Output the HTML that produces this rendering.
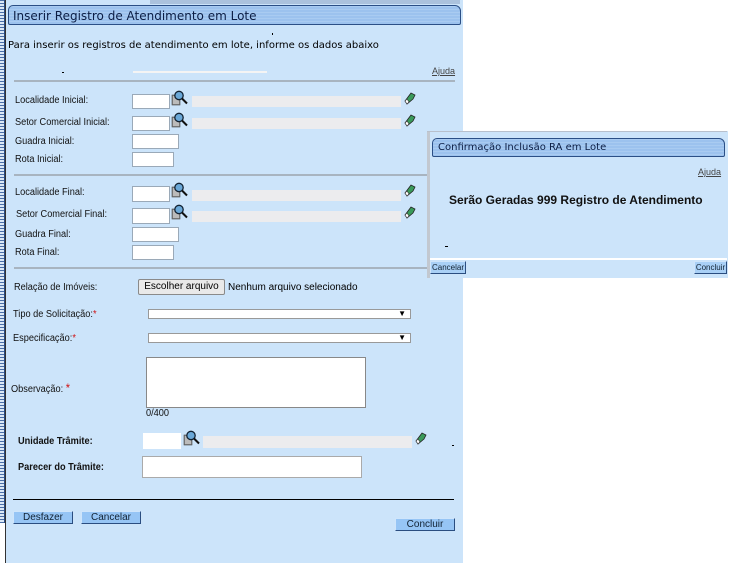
<!DOCTYPE html>
<html><head><meta charset="utf-8"><style>
*{margin:0;padding:0;box-sizing:border-box}
body{width:744px;height:574px;background:#fff;position:relative;overflow:hidden;font-family:"Liberation Sans",sans-serif;font-size:10px;color:#000}
.a{position:absolute}
.panel{left:6px;top:0;width:457px;height:563px;background:#cce4fa}
.stripe{left:0;top:0;width:5px;height:523px;background:repeating-linear-gradient(#4a6fa8 0 1px,#dbe8f6 1px 3px);border-right:1px solid #2a4a80}
.vline{left:5px;top:0;width:1px;height:563px;background:#333}
.title{background:repeating-linear-gradient(#a9cbf1 0 1px,#9cc2ee 1px 3px);border:1px solid #2b4f86;border-radius:5px 6px 2px 2px;font-family:"DejaVu Sans",sans-serif;color:#0b1d44}
.lbl{font-size:10px;color:#111;transform:scaleX(0.92);transform-origin:left}
.in{background:#fff;border:1px solid #9aa9b8}
.gray{background:#ececee}
.hr{height:2px;background:#a8b4c0}
.btn{background:#96c5f5;border:1px solid #2a4d80;border-left-color:#cfe5fb;border-top-color:#cfe5fb;font-size:10px;text-align:center;color:#123;line-height:11px}
.red{color:#d01010}
</style></head><body>
<div class="a panel"></div>
<div class="a stripe"></div>
<div class="a vline"></div>
<div class="a" style="left:150px;top:0;width:310px;height:4px;background:#8aa0c0;opacity:.5"></div>
<div class="a title" style="left:8px;top:5px;width:453px;height:20px;font-size:12px;padding:3px 0 0 4px">Inserir Registro de Atendimento em Lote</div>
<div class="a" style="left:272px;top:33px;width:1px;height:2px;background:#000"></div>
<div class="a" style="left:8px;top:40px;font-family:'DejaVu Sans',sans-serif;font-size:10px">Para inserir os registros de atendimento em lote, informe os dados abaixo</div>
<div class="a" style="left:62px;top:72px;width:2px;height:1px;background:#000"></div>
<div class="a" style="left:133px;top:71px;width:134px;height:2px;background:#f4f4f4"></div>
<div class="a" style="left:432px;top:66px;font-size:9px;color:#444;text-decoration:underline">Ajuda</div>
<div class="a hr" style="left:14px;top:80px;width:441px"></div>

<svg width="0" height="0" style="position:absolute"><defs>
<symbol id="mag" viewBox="0 0 18 16"><rect x="1" y="5" width="8" height="10" fill="#888" stroke="#444" stroke-width=".6"/><rect x="2" y="6" width="6" height="8" fill="#bbb"/><circle cx="8" cy="5.5" r="4.2" fill="#6aa8d8" stroke="#123" stroke-width="1.3"/><line x1="11" y1="8.5" x2="16" y2="13.5" stroke="#111" stroke-width="2"/></symbol>
<symbol id="er" viewBox="0 0 12 14"><path d="M3 13 L1 10 L7 2 L11 4 L9 8 Z" fill="#3a9a5a" stroke="#222" stroke-width=".8"/><path d="M1 10 L3 13 L5 11 L3 8Z" fill="#fff" stroke="#333" stroke-width=".6"/></symbol>
</defs></svg>

<div class="a lbl" style="left:15px;top:95px">Localidade Inicial:</div>
<div class="a in" style="left:132px;top:94px;width:38px;height:15px"></div>
<svg class="a" style="left:171px;top:90px" width="18" height="16"><use href="#mag"/></svg>
<div class="a gray" style="left:192px;top:96px;width:209px;height:11px"></div>
<svg class="a" style="left:404px;top:91px" width="12" height="14"><use href="#er"/></svg>

<div class="a lbl" style="left:15px;top:117px">Setor Comercial Inicial:</div>
<div class="a in" style="left:132px;top:116px;width:38px;height:15px"></div>
<svg class="a" style="left:171px;top:112px" width="18" height="16"><use href="#mag"/></svg>
<div class="a gray" style="left:192px;top:118px;width:209px;height:11px"></div>
<svg class="a" style="left:404px;top:113px" width="12" height="14"><use href="#er"/></svg>

<div class="a lbl" style="left:15px;top:136px">Guadra Inicial:</div>
<div class="a in" style="left:132px;top:134px;width:47px;height:15px"></div>
<div class="a lbl" style="left:15px;top:154px">Rota Inicial:</div>
<div class="a in" style="left:132px;top:152px;width:42px;height:15px"></div>
<div class="a hr" style="left:14px;top:174px;width:441px"></div>

<div class="a lbl" style="left:15px;top:187px">Localidade Final:</div>
<div class="a in" style="left:132px;top:186px;width:38px;height:16px"></div>
<svg class="a" style="left:171px;top:182px" width="18" height="16"><use href="#mag"/></svg>
<div class="a gray" style="left:192px;top:190px;width:209px;height:11px"></div>
<svg class="a" style="left:404px;top:183px" width="12" height="14"><use href="#er"/></svg>

<div class="a lbl" style="left:16px;top:209px">Setor Comercial Final:</div>
<div class="a in" style="left:132px;top:208px;width:38px;height:16px"></div>
<svg class="a" style="left:171px;top:204px" width="18" height="16"><use href="#mag"/></svg>
<div class="a gray" style="left:192px;top:211px;width:209px;height:11px"></div>
<svg class="a" style="left:404px;top:205px" width="12" height="14"><use href="#er"/></svg>

<div class="a lbl" style="left:15px;top:229px">Guadra Final:</div>
<div class="a in" style="left:132px;top:227px;width:47px;height:15px"></div>
<div class="a lbl" style="left:15px;top:247px">Rota Final:</div>
<div class="a in" style="left:132px;top:245px;width:42px;height:15px"></div>
<div class="a hr" style="left:14px;top:267px;width:441px"></div>

<div class="a lbl" style="left:14px;top:282px">Relação de Imóveis:</div>
<div class="a" style="left:138px;top:279px;width:87px;height:16px;background:#e9e9e9;border:1px solid #8a8a8a;border-radius:2px;font-size:10px;text-align:center;line-height:14px">Escolher arquivo</div>
<div class="a" style="left:228px;top:282px;font-size:10px">Nenhum arquivo selecionado</div>

<div class="a lbl" style="left:13px;top:309px">Tipo de Solicitação:<span class="red">*</span></div>
<div class="a" style="left:148px;top:309px;width:263px;height:10px;background:#fff;border:1px solid #999;font-size:8px;text-align:right;padding-right:4px;line-height:8px">▼</div>
<div class="a lbl" style="left:13px;top:333px">Especificação:<span class="red">*</span></div>
<div class="a" style="left:148px;top:333px;width:263px;height:10px;background:#fff;border:1px solid #999;font-size:8px;text-align:right;padding-right:4px;line-height:8px">▼</div>

<div class="a lbl" style="left:11px;top:381px">Observação: <span class="red" style="font-size:12px">*</span></div>
<div class="a in" style="left:146px;top:357px;width:220px;height:51px;border-color:#888"></div>
<div class="a lbl" style="left:146px;top:408px">0/400</div>

<div class="a lbl" style="left:18px;top:436px;font-weight:bold">Unidade Trâmite:</div>
<div class="a in" style="left:143px;top:433px;width:38px;height:16px;border:none"></div>
<svg class="a" style="left:183px;top:430px" width="18" height="16"><use href="#mag"/></svg>
<div class="a gray" style="left:203px;top:436px;width:209px;height:12px"></div>
<svg class="a" style="left:415px;top:431px" width="12" height="14"><use href="#er"/></svg>
<div class="a" style="left:452px;top:445px;width:2px;height:1px;background:#000"></div>

<div class="a lbl" style="left:18px;top:462px;font-weight:bold">Parecer do Trâmite:</div>
<div class="a in" style="left:142px;top:456px;width:220px;height:22px;border-color:#aaa"></div>

<div class="a" style="left:13px;top:499px;width:441px;height:1px;background:#000"></div>
<div class="a btn" style="left:13px;top:511px;width:60px;height:13px">Desfazer</div>
<div class="a btn" style="left:81px;top:511px;width:60px;height:13px">Cancelar</div>
<div class="a btn" style="left:395px;top:518px;width:60px;height:13px">Concluir</div>

<div class="a" style="left:427px;top:131px;width:301px;height:147px;background:#cce4fa;border-left:3px solid #c2c8d0"></div>
<div class="a" style="left:427px;top:131px;width:300px;height:1px;background:#b8c0cc"></div>
<div class="a title" style="left:432px;top:138px;width:293px;height:19px;font-size:10px;padding:3px 0 0 5px">Confirmação Inclusão RA em Lote</div>
<div class="a" style="left:698px;top:167px;font-size:9px;color:#444;text-decoration:underline">Ajuda</div>
<div class="a" style="left:449px;top:193px;font-family:'Liberation Sans',sans-serif;font-size:12px;font-weight:bold;color:#111">Serão Geradas 999 Registro de Atendimento</div>
<div class="a" style="left:445px;top:246px;width:3px;height:1px;background:#000"></div>
<div class="a" style="left:430px;top:258px;width:297px;height:2px;background:#fff"></div>
<div class="a btn" style="left:430px;top:261px;width:36px;height:13px;font-size:8px;background:#a9d0f6">Cancelar</div>
<div class="a btn" style="left:694px;top:261px;width:33px;height:13px;font-size:8px;background:#a9d0f6">Concluir</div>
</body></html>
